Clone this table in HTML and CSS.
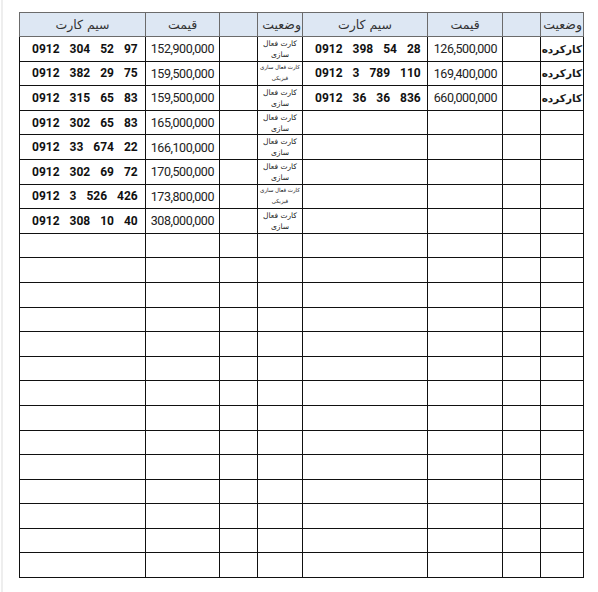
FILE: index.html
```html
<!DOCTYPE html>
<html lang="fa">
<head>
<meta charset="utf-8">
<link rel="stylesheet" href="styles.css">
</head>
<body>
<div class="page">
<table class="grid">
<colgroup>
<col class="c-num"><col class="c-price"><col class="c-blank"><col class="c-stat">
<col class="c-num2"><col class="c-price2"><col class="c-blank"><col class="c-stat2">
</colgroup>
<thead>
<tr>
<th>سیم کارت</th><th>قیمت</th><th></th><th class="h-stat">وضعیت</th>
<th>سیم کارت</th><th>قیمت</th><th></th><th class="h-stat">وضعیت</th>
</tr>
</thead>
<tbody>
<tr><td class="num">0912 304 52 97</td><td class="price">152,900,000</td><td></td><td class="stat">کارت فعال سازی</td>
<td class="num">0912 398 54 28</td><td class="price">126,500,000</td><td></td><td class="work">کارکرده</td></tr>
<tr><td class="num">0912 382 29 75</td><td class="price">159,500,000</td><td></td><td class="stat small">کارت فعال سازی فیزیکی</td>
<td class="num">0912 3 789 110</td><td class="price">169,400,000</td><td></td><td class="work">کارکرده</td></tr>
<tr><td class="num">0912 315 65 83</td><td class="price">159,500,000</td><td></td><td class="stat">کارت فعال سازی</td>
<td class="num">0912 36 36 836</td><td class="price">660,000,000</td><td></td><td class="work">کارکرده</td></tr>
<tr><td class="num">0912 302 65 83</td><td class="price">165,000,000</td><td></td><td class="stat">کارت فعال سازی</td><td></td><td></td><td></td><td></td></tr>
<tr><td class="num">0912 33 674 22</td><td class="price">166,100,000</td><td></td><td class="stat">کارت فعال سازی</td><td></td><td></td><td></td><td></td></tr>
<tr><td class="num">0912 302 69 72</td><td class="price">170,500,000</td><td></td><td class="stat">کارت فعال سازی</td><td></td><td></td><td></td><td></td></tr>
<tr><td class="num">0912 3 526 426</td><td class="price">173,800,000</td><td></td><td class="stat small">کارت فعال سازی فیزیکی</td><td></td><td></td><td></td><td></td></tr>
<tr><td class="num">0912 308 10 40</td><td class="price">308,000,000</td><td></td><td class="stat">کارت فعال سازی</td><td></td><td></td><td></td><td></td></tr>
<tr><td></td><td></td><td></td><td></td><td></td><td></td><td></td><td></td></tr>
<tr><td></td><td></td><td></td><td></td><td></td><td></td><td></td><td></td></tr>
<tr><td></td><td></td><td></td><td></td><td></td><td></td><td></td><td></td></tr>
<tr><td></td><td></td><td></td><td></td><td></td><td></td><td></td><td></td></tr>
<tr><td></td><td></td><td></td><td></td><td></td><td></td><td></td><td></td></tr>
<tr><td></td><td></td><td></td><td></td><td></td><td></td><td></td><td></td></tr>
<tr><td></td><td></td><td></td><td></td><td></td><td></td><td></td><td></td></tr>
<tr><td></td><td></td><td></td><td></td><td></td><td></td><td></td><td></td></tr>
<tr><td></td><td></td><td></td><td></td><td></td><td></td><td></td><td></td></tr>
<tr><td></td><td></td><td></td><td></td><td></td><td></td><td></td><td></td></tr>
<tr><td></td><td></td><td></td><td></td><td></td><td></td><td></td><td></td></tr>
<tr><td></td><td></td><td></td><td></td><td></td><td></td><td></td><td></td></tr>
<tr><td></td><td></td><td></td><td></td><td></td><td></td><td></td><td></td></tr>
<tr><td></td><td></td><td></td><td></td><td></td><td></td><td></td><td></td></tr>
</tbody>
</table>
</div>
</body>
</html>
```
FILE: styles.css
```css
html, body {
  margin: 0;
  padding: 0;
  background: #ffffff;
}
body {
  font-family: Roboto, "DejaVu Sans", sans-serif;
  color: #1a1a1a;
}
.page {
  width: 597px;
  height: 592px;
  box-sizing: border-box;
  margin-left: 1px;
  padding: 12px 0 0 16px;
  border-left: 2px solid #eeeeee;
}
.grid {
  border-collapse: collapse;
  table-layout: fixed;
  width: 564px;
}
.c-num { width: 126px; }
.c-price { width: 74px; }
.c-blank { width: 38px; }
.c-stat { width: 45px; }
.c-num2 { width: 125px; }
.c-price2 { width: 75px; }
.c-stat2 { width: 43px; }

.grid thead tr { height: 24px; }
.grid tbody tr { height: 24.6px; }

.grid th {
  background: #dde7f3;
  border: 1.5px solid #6b6b6b;
  font-family: "DejaVu Sans", sans-serif;
  font-weight: normal;
  font-size: 12.5px;
  color: #333;
  padding: 0;
  text-align: center;
}
.grid th.h-stat {
  text-align: right;
  padding-right: 1px;
  white-space: nowrap;
}
.grid td {
  border: 1.5px solid #111;
  padding: 0;
  overflow: hidden;
  white-space: nowrap;
}
.grid tbody tr:first-child td {
  border-top-color: #555;
}
.num {
  font-weight: bold;
  font-size: 12px;
  text-align: left;
  padding-left: 12px !important;
  word-spacing: 7px;
  color: #111;
}
.price {
  font-size: 12.5px;
  letter-spacing: -0.45px;
  text-align: right;
  padding-right: 5px !important;
  color: #222;
}
.stat {
  font-family: "DejaVu Sans", sans-serif;
  font-size: 7.5px;
  line-height: 11px;
  text-align: center;
  white-space: normal !important;
  direction: rtl;
  padding: 0 4px !important;
}
.stat.small {
  font-size: 5.5px;
  line-height: 11px;
  padding: 0 1px !important;
}
.grid td.work {
  font-family: "DejaVu Sans", sans-serif;
  font-weight: bold;
  font-size: 10.5px;
  text-align: right;
  direction: rtl;
  padding-right: 1px;
  overflow: visible;
}
```
